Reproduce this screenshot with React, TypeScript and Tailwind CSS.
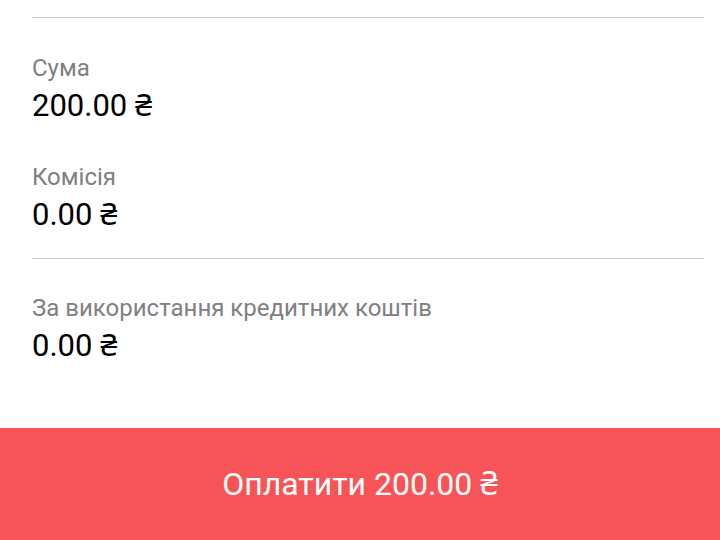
import React from 'react'

type RowProps = {
  label: string
  value: string
  className?: string
}

const Row = ({ label, value, className }: RowProps) => (
  <div className={`flex flex-col gap-[6px] ${className ?? ''}`}>
    <p className="text-[24px] leading-[28px] text-[#808080]">{label}</p>
    <p className="text-[31px] leading-[36px] text-black">{value}</p>
  </div>
)

const App = () => {
  return (
    <div
      className="flex h-[540px] w-[720px] flex-col bg-white"
      style={{ fontFamily: 'Roboto, "Noto Sans", sans-serif' }}
    >
      <div className="pl-8 pr-4 pt-[17px]">
        <div className="h-px bg-[#cfcfcf]" />
        <Row className="mt-9" label="Сума" value="200.00 ₴" />
        <Row className="mt-[39px]" label="Комісія" value="0.00 ₴" />
        <div className="mt-[25px] h-px bg-[#cfcfcf]" />
        <Row className="mt-[35px]" label="За використання кредитних коштів" value="0.00 ₴" />
      </div>
      <button className="mt-auto flex h-[112px] w-full items-center justify-center bg-[#f75457] text-[32px] text-white">
        Оплатити 200.00 ₴
      </button>
    </div>
  )
}

export default App
